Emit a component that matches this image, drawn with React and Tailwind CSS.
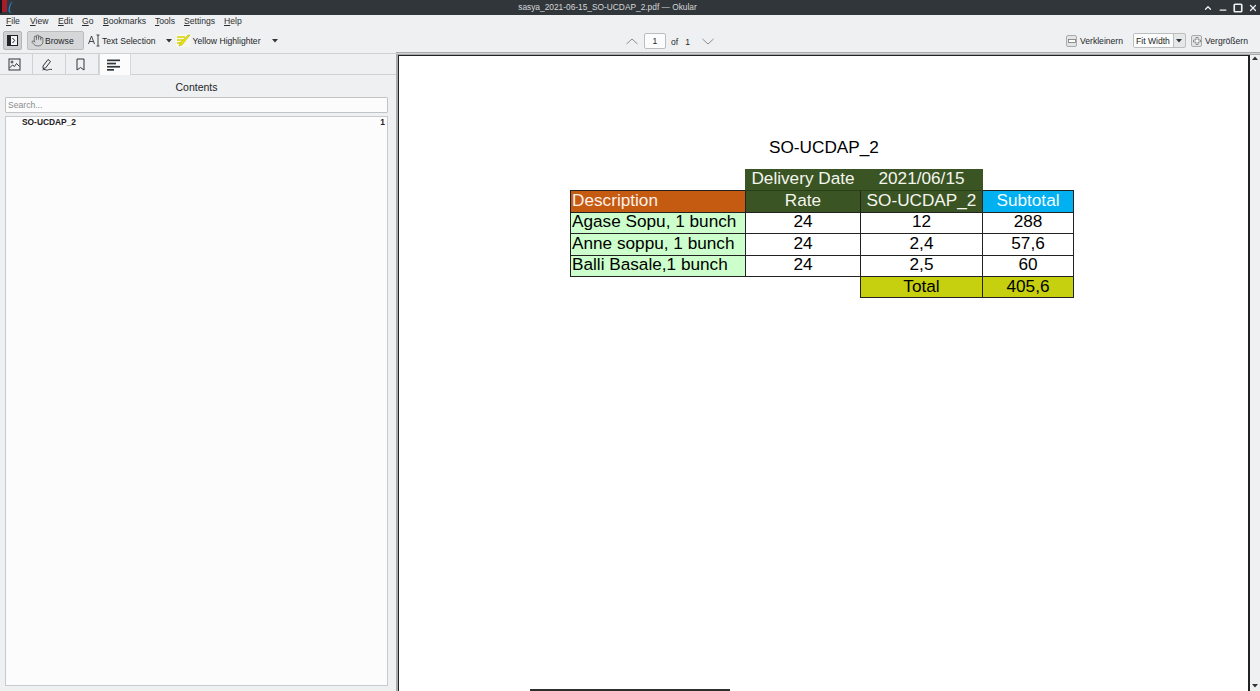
import React from "react";
import { Hand, ChevronUp, X, Minus, Square } from "lucide-react";

const Caret = ({ className = "" }) => (
  <svg width="7" height="4" viewBox="0 0 7 4" className={className}><path d="M0 0h6L3 3.500z" fill="#31363b" /></svg>
);

const ScrollArrow = ({ down }) => (
  <svg width="10" height="6" viewBox="0 0 10 6"><path d={down ? "M2 1h6L5 4.500z" : "M2 5h6L5 1.500z"} fill="#31363b" /></svg>
);

function Menu({ label, w }) {
  return (
    <span className={w}>
      <span className="underline underline-offset-1">{label[0]}</span>
      {label.slice(1)}
    </span>
  );
}

function PlainIcon({ children }) {
  return (
    <svg width="13" height="13" viewBox="0 0 13 13" fill="none" stroke="#31363b" strokeWidth="1">{children}</svg>
  );
}

function ZoomBtn({ plus }) {
  return (
    <span className="w-[11px] h-[12px] rounded-[2px] border border-[#a9abad] bg-[#e3e4e5] flex items-center justify-center">
      <svg width="8" height="8" viewBox="0 0 8 8" fill="#fff" stroke="#777" strokeWidth="0.8">
        {plus ? <path d="M3 .5h2v2.500h2.500v2H5v2.500H3V5H.5V3H3z" /> : <rect x=".5" y="2.500" width="7" height="3" />}
      </svg>
    </span>
  );
}

function Tab({ children, active }) {
  return (
    <div className={active
      ? "w-[32px] h-[21px] bg-[#fcfcfc] border-x border-[#d5d6d7] flex items-center justify-center pr-[3px]"
      : "w-[33px] h-[21px] bg-[#eff0f1] border-r border-b border-[#d0d1d2] flex items-center justify-center pr-[3px]"}>
      {children}
    </div>
  );
}

const bc = "border border-[#222] text-center";
const hd = "border border-[#3a5423] border-b-[#2a3d19] bg-[#3a5423] text-[#f4f6ef] text-center whitespace-nowrap !pb-[3px]";

export default function App() {
  return (
    <div className="w-[1260px] h-[691px] flex flex-col overflow-hidden bg-[#eff0f1] text-[#232629] text-[8.600px] leading-none font-['Liberation_Sans',sans-serif]">
      {/* Title bar */}
      <div className="h-[15px] shrink-0 bg-[#31363b] text-[#d5d6d7] flex items-center">
        <svg width="15" height="15" viewBox="0 0 15 15" className="shrink-0">
          <path d="M2 0h5v12H2z" fill="#a51d2a" />
          <path d="M0 0h2v13H0z" fill="#15171a" />
          <path d="M12.500 1C10 3 8.500 7 8.500 11c0 1 1 1.500 3.500 1.500-1.500-.5-2.300-1-2.300-2 0-3 1-6 2.800-9.500z" fill="#1d8fe0" />
        </svg>
        <span className="flex-1 text-center text-[8.350px] pr-[3px]">sasya_2021-06-15_SO-UCDAP_2.pdf — Okular</span>
        <div className="flex items-center gap-[5px] pr-[2px] text-[#eff0f1]">
          <ChevronUp size={10} strokeWidth={3} />
          <Minus size={10} strokeWidth={3} className="translate-y-[2px]" />
          <Square size={10} strokeWidth={4} />
          <X size={10} strokeWidth={3} />
        </div>
      </div>

      {/* Menu */}
      <div className="h-[13px] shrink-0 flex items-center pl-[6px] text-[#2c2f32]">
        <Menu label="File" w="w-[24px]" />
        <Menu label="View" w="w-[28px]" />
        <Menu label="Edit" w="w-[24px]" />
        <Menu label="Go" w="w-[21px]" />
        <Menu label="Bookmarks" w="w-[52px]" />
        <Menu label="Tools" w="w-[29px]" />
        <Menu label="Settings" w="w-[40px]" />
        <Menu label="Help" w="w-[20px]" />
      </div>

      {/* Toolbar */}
      <div className="h-[26px] shrink-0 flex items-center relative border-b border-[#d0d1d2]">
        <div className="flex items-center flex-1 pl-[3px]">
          <span className="w-[19px] h-[19px] rounded-[2px] bg-[#cfd0d2] border border-[#b4b5b7] flex items-center justify-center">
            <svg width="11" height="11" viewBox="0 0 11 11"><rect x=".5" y=".5" width="10" height="10" fill="#f4f4f4" stroke="#232629" /><rect x=".5" y=".5" width="3.500" height="10" fill="#232629" /><path d="M5.500 3 7.700 5.500 5.500 8" stroke="#232629" fill="none" /></svg>
          </span>
          <span className="ml-[5px] w-[57px] h-[19px] rounded-[2px] bg-[#d5d6d8] border border-[#bcbdbf] flex items-center pl-[3px] gap-[1px]">
            <Hand size={13} strokeWidth={1} />
            <span className="pt-[2px]">Browse</span>
          </span>
          <svg width="13" height="13" viewBox="0 0 13 13" className="ml-[4px]" fill="none" stroke="#31363b" strokeWidth="0.9">
            <path d="M.5 10 3.500 2 6.500 10M1.500 7.500h4M8.500 1h3M10 1v11M8.500 12h3" />
          </svg>
          <span className="ml-[1px] pt-[2px]">Text Selection</span>
          <Caret className="ml-[10px]" />
          <svg width="15" height="13" viewBox="0 0 15 13" className="ml-[3px]">
            <rect width="15" height="13" fill="#f6f6f0" />
            <path d="M1 3h8M1 6h6M1 9h4" stroke="#d7d300" strokeWidth="1.500" />
            <path d="M14 1 6 11l-3 1 1-3 8-8z" fill="#e8e400" stroke="#9b9900" strokeWidth=".4" />
          </svg>
          <span className="ml-[2px] pt-[2px]">Yellow Highlighter</span>
          <Caret className="ml-[11px]" />
        </div>
        <div className="absolute left-[626px] top-[5px] flex items-center">
          <svg width="12" height="7" viewBox="0 0 12 7" fill="none" stroke="#8a8c8e"><path d="M.5 6 6 1l5.500 5" /></svg>
          <span className="ml-[6px] w-[22px] h-[16px] rounded-[2px] border border-[#bcbdbe] bg-[#fcfcfc] flex items-center justify-center pt-[1px]">1</span>
          <span className="ml-[5px] pt-[2px]">of</span>
          <span className="ml-[7px] pt-[2px]">1</span>
          <svg width="12" height="7" viewBox="0 0 12 7" fill="none" stroke="#8a8c8e" className="ml-[12px]"><path d="M.5 1 6 6l5.500-5" /></svg>
        </div>
        <div className="flex items-center pr-[12px]">
          <ZoomBtn />
          <span className="ml-[3px] pt-[2px]">Verkleinern</span>
          <span className="ml-[10px] w-[53px] h-[15px] rounded-[2px] border border-[#bcbdbe] bg-[#e6e7e8] flex items-center">
            <span className="pl-[2px] w-[40px] h-[13px] flex items-center pt-[1px] border-r border-[#bcbdbe] bg-[#fcfcfc]">Fit Width</span>
            <span className="flex-1 flex justify-center"><Caret /></span>
          </span>
          <span className="ml-[5px]"><ZoomBtn plus /></span>
          <span className="ml-[3px] pt-[2px]">Vergrößern</span>
        </div>
      </div>

      {/* Body */}
      <div className="flex-1 min-h-0 flex">
        {/* Side panel */}
        <div className="w-[396px] shrink-0 flex flex-col">
          <div className="h-[21px] flex items-start shrink-0">
            <Tab>
              <PlainIcon>
                <rect x="1" y="1" width="11" height="11" />
                <path d="m1.500 10 3-3 2 1.500 2-3 3 3" />
                <circle cx="4" cy="4" r="1" />
              </PlainIcon>
            </Tab>
            <Tab>
              <PlainIcon>
                <path d="m2 8 5-6.500 2.500 2-5 6.500-2.500 .5zM1.500 12c2-1.500 3 .5 5 0s2-1 4.500-.5" />
              </PlainIcon>
            </Tab>
            <Tab>
              <PlainIcon>
                <path d="M3 1h7v11l-3.500-2.500L3 12z" />
              </PlainIcon>
            </Tab>
            <Tab active>
              <svg width="13" height="12" viewBox="0 0 13 12" fill="#31363b">
                <rect width="13" height="1.700" y="0.500" /><rect width="9" height="1.700" y="3.700" />
                <rect width="13" height="1.700" y="6.900" /><rect width="7" height="1.700" y="10" />
              </svg>
            </Tab>
            <div className="flex-1 h-full border-b border-[#d0d1d2]" />
          </div>
          <div className="flex-1 min-h-0 flex flex-col pl-[5px] pr-[8px] pb-[5px]">
            <div className="h-[22px] shrink-0 flex items-center justify-center text-[10.500px] pt-[2px]">Contents</div>
            <div className="h-[16px] shrink-0 border border-[#c2c3c4] bg-[#fcfcfc] rounded-[1px] flex items-center pl-[2px] text-[#8a8c8e]">Search...</div>
            <div className="mt-[3px] flex-1 min-h-0 border border-[#c9cacb] bg-[#fcfcfc]">
              <div className="flex justify-between pl-[16px] pr-[2px] pt-[1px] font-bold text-[8.400px] text-[#1e2023]">
                <span>SO-UCDAP_2</span>
                <span>1</span>
              </div>
            </div>
          </div>
        </div>

        {/* Document view */}
        <div className="flex-1 min-w-0 flex -mt-[2px] border-t-[3px] border-l-2 border-[#a9aaab]">
          <div className="flex-1 min-w-0 flex flex-col bg-white border-l border-t border-r-2 border-[#222] text-black">
            <div className="pt-[81px] pl-[370px] h-[112px] shrink-0">
              <span className="text-[17.200px] leading-[20px] block whitespace-nowrap">SO-UCDAP_2</span>
            </div>
            <table className="table-fixed border-collapse text-[17.200px] leading-none ml-[171px] mt-[1px] w-[503px] [&_td]:pb-[2px]">
              <colgroup>
                <col className="w-[175px]" /><col className="w-[115px]" /><col className="w-[122px]" /><col className="w-[91px]" />
              </colgroup>
              <tbody>
                <tr className="h-[21.400px]">
                  <td />
                  <td className={hd}>Delivery Date</td>
                  <td className={hd}>2021/06/15</td>
                  <td />
                </tr>
                <tr className="h-[21.400px]">
                  <td className="border border-[#222] bg-[#c55a11] text-[#fbf1ea] pl-[1px]">Description</td>
                  <td className={`${bc} bg-[#3a5423] text-[#f4f6ef]`}>Rate</td>
                  <td className={`${bc} bg-[#3a5423] text-[#f4f6ef]`}>SO-UCDAP_2</td>
                  <td className={`${bc} bg-[#00b0f0] text-[#f4fbff]`}>Subtotal</td>
                </tr>
                {[
                  ["Agase Sopu, 1 bunch", "24", "12", "288"],
                  ["Anne soppu, 1 bunch", "24", "2,4", "57,6"],
                  ["Balli Basale,1 bunch", "24", "2,5", "60"],
                ].map((r) => (
                  <tr className="h-[21.400px]" key={r[0]}>
                    <td className="border border-[#222] bg-[#ccffcc] pl-[1px] whitespace-nowrap">{r[0]}</td>
                    <td className={bc}>{r[1]}</td>
                    <td className={bc}>{r[2]}</td>
                    <td className={bc}>{r[3]}</td>
                  </tr>
                ))}
                <tr className="h-[21.400px]">
                  <td colSpan={2} />
                  <td className={`${bc} bg-[#c7d00f]`}>Total</td>
                  <td className={`${bc} bg-[#c7d00f]`}>405,6</td>
                </tr>
              </tbody>
            </table>
            <div className="mt-auto ml-[131px] w-[200px] h-[2px] bg-[#2c2e30]" />
          </div>
          <div className="w-[10px] shrink-0 bg-[#eff0f1] flex flex-col items-center justify-between pb-[2px]">
            <ScrollArrow />
            <ScrollArrow down />
          </div>
        </div>
      </div>
    </div>
  );
}
